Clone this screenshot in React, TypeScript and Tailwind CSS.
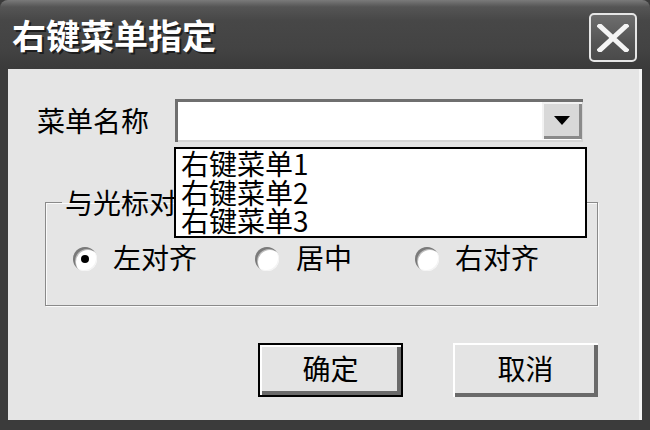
import React from "react";

const FONT = { fontFamily: '"Noto Sans CJK SC", "Noto Sans", sans-serif' };

function Radio({ checked }: { checked?: boolean }) {
  return (
    <span className="relative flex h-[24px] w-[24px] items-center justify-center rounded-full bg-white shadow-[inset_2px_2px_0_#7a7a7a,inset_3px_3px_0_#bdbdbd,inset_-1px_-1px_0_#f4f4f4]">
      {checked && <span className="h-[8px] w-[8px] rounded-full bg-black" />}
    </span>
  );
}

export default function App() {
  return (
    <div
      className="flex h-[430px] w-[650px] flex-col overflow-hidden bg-[#3b3b3b]"
      style={FONT}
    >
      {/* Title bar */}
      <div className="flex h-[69px] shrink-0 items-start rounded-t-[8px] bg-[linear-gradient(to_bottom,#7a7a7a_0%,#555555_10%,#474747_30%,#434343_70%,#3a3a3a_100%)] pl-[12px] pr-[13px]">
        <div className="mt-[15px] text-[34px] font-bold leading-[40px] text-white [text-shadow:2px_2px_0_#1e1e1e]">
          右键菜单指定
        </div>
        <div className="ml-auto mt-[13px] flex h-[49px] w-[48px] items-center justify-center rounded-[5px] border-2 border-[#e6e6e6] bg-[linear-gradient(to_bottom,#6e6e6e,#555555_60%,#4a4a4a)]">
          <svg width="32" height="28" viewBox="0 0 32 28">
            <path d="M3 2 L29 26 M29 2 L3 26" stroke="#f4f4f4" strokeWidth="5" strokeLinecap="square" />
          </svg>
        </div>
      </div>

      {/* Body */}
      <div className="relative mx-[8px] mb-[10px] flex flex-1 flex-col bg-[#e5e5e5] shadow-[inset_-3px_0_0_#f5f5f5]">
        {/* Row 1 */}
        <div className="mt-[30px] flex items-center pl-[29px]">
          <span className="w-[138px] pb-[2px] text-[28px] leading-[30px] text-black">菜单名称</span>
          <div className="flex h-[43px] w-[408px] items-center justify-end bg-white pr-[1px] shadow-[inset_3px_3px_0_#6f6f6f,inset_-2px_-2px_0_#d6d6d6]">
            <div className="flex h-[37px] w-[40px] items-center justify-center bg-[#d8d8d8] shadow-[inset_2px_2px_0_#f2f2f2,inset_-3px_-3px_0_#8a8a8a]">
              <svg width="16" height="9" viewBox="0 0 16 9">
                <path d="M0 0 H16 L8 9 Z" fill="#000" />
              </svg>
            </div>
          </div>
        </div>

        {/* Group box */}
        <fieldset className="ml-[37px] mt-[46px] w-[553px] border border-[#8a8a8a] shadow-[1px_1px_0_#fafafa,inset_1px_1px_0_#fafafa]">
          <legend className="ml-[16px] px-[3px] text-[28px] leading-[28px] text-black">与光标对齐</legend>
          <div className="mb-[31px] mt-[27px] flex items-center pl-[27px] text-[28px] leading-[28px] text-black">
            <div className="flex w-[182px] items-center gap-[16px]">
              <Radio checked />
              <span className="pb-[3px]">左对齐</span>
            </div>
            <div className="flex w-[160px] items-center gap-[17px]">
              <Radio />
              <span className="pb-[3px]">居中</span>
            </div>
            <div className="flex items-center gap-[16px]">
              <Radio />
              <span className="pb-[3px]">右对齐</span>
            </div>
          </div>
        </fieldset>

        {/* Buttons */}
        <div className="mt-[37px] flex gap-[50px] pl-[250px]">
          <button className="flex h-[54px] w-[145px] items-center justify-center border-2 border-black bg-[#e4e4e4] pb-[5px] text-[28px] leading-[30px] text-black shadow-[inset_2px_2px_0_#ffffff,inset_-4px_-4px_0_#6a6a6a]">
            确定
          </button>
          <button className="flex h-[54px] w-[145px] items-center justify-center bg-[#e4e4e4] pb-[5px] text-[28px] leading-[30px] text-black shadow-[inset_2px_2px_0_#ffffff,inset_-4px_-4px_0_#6a6a6a]">
            取消
          </button>
        </div>

        {/* Dropdown list (overlay) */}
        <div className="absolute left-[166px] top-[78px] h-[91px] w-[413px] border-2 border-black bg-white pl-[5px] text-[28px] leading-[28.5px] text-black">
          <div>右键菜单1</div>
          <div>右键菜单2</div>
          <div>右键菜单3</div>
        </div>
      </div>
    </div>
  );
}
